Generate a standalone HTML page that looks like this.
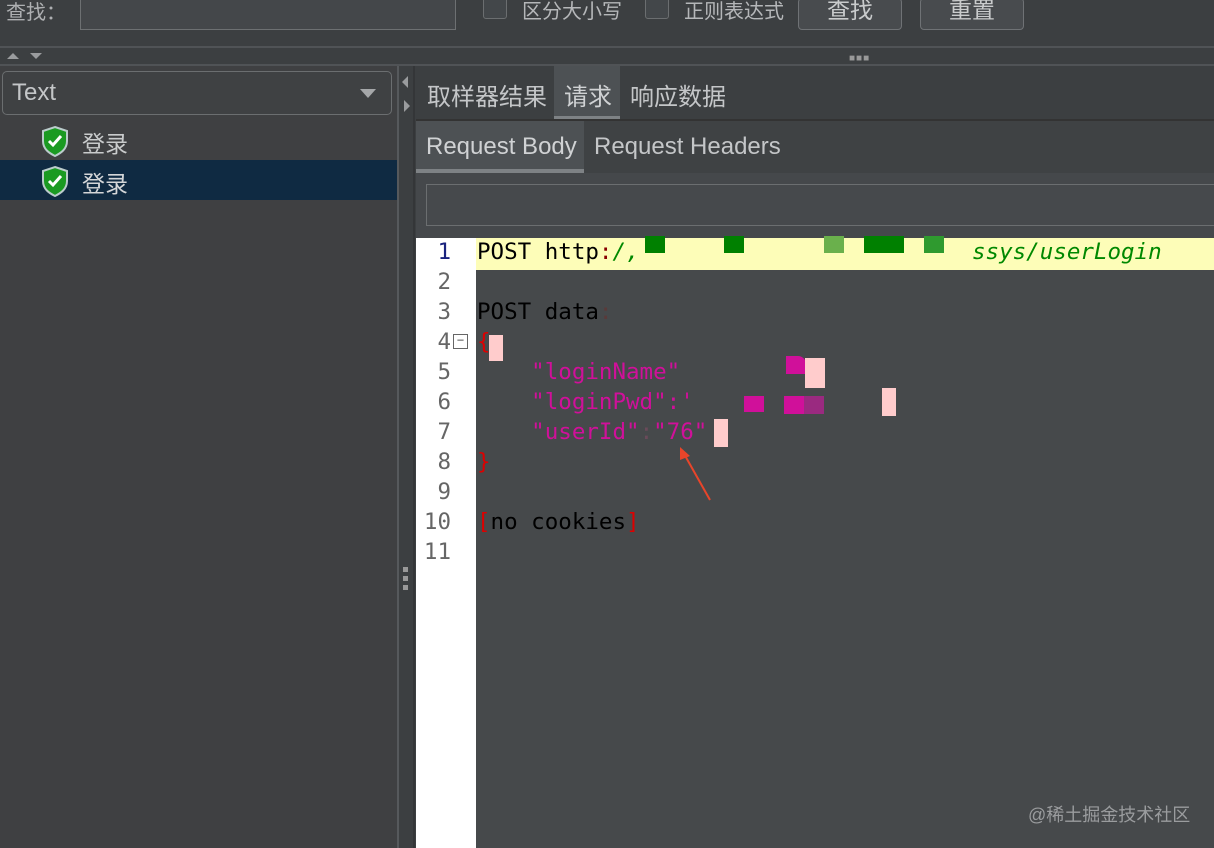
<!DOCTYPE html>
<html><head><meta charset="utf-8"><style>
*{margin:0;padding:0;box-sizing:border-box}
body{width:1214px;height:848px;overflow:hidden;background:#3c3f41;font-family:"Liberation Sans","Noto Sans CJK SC",sans-serif;color:#c9cbcc;position:relative}
.a{position:absolute}
.cb{position:absolute;width:24px;height:22px;border:1px solid #6b6e70;border-radius:3px;background:#43474a}
.btn{position:absolute;height:32px;border:1px solid #6f7275;border-radius:4px;background:#484b4e;font-size:23px;text-align:center;line-height:22px;color:#c9cbcc}
.mono{font-family:"DejaVu Sans Mono","Liberation Mono",monospace;font-size:22.5px;white-space:pre}
.ln{position:absolute;left:416px;width:60px;text-align:right;padding-right:25px;color:#666}
.cl{position:absolute;left:477px}
</style></head><body>
<div class="a" style="left:6px;top:-4px;font-size:20px;color:#aeb0b2">查找：</div>
<div class="a" style="left:80px;top:-4px;width:376px;height:34px;border:1px solid #6d7072;background:#44474a"></div>
<div class="cb" style="left:483px;top:-3px"></div>
<div class="a" style="left:522px;top:-5px;font-size:20px;color:#b5b7b9">区分大小写</div>
<div class="cb" style="left:645px;top:-3px"></div>
<div class="a" style="left:684px;top:-5px;font-size:20px;color:#b5b7b9">正则表达式</div>
<div class="btn" style="left:798px;top:-2px;width:104px">查找</div>
<div class="btn" style="left:920px;top:-2px;width:104px">重置</div>
<div class="a" style="left:0;top:46px;width:1214px;height:2px;background:#505356"></div>
<div class="a" style="left:7px;top:53px;width:0;height:0;border-left:6px solid transparent;border-right:6px solid transparent;border-bottom:6px solid #9a9c9e"></div>
<div class="a" style="left:30px;top:53px;width:0;height:0;border-left:6px solid transparent;border-right:6px solid transparent;border-top:6px solid #9a9c9e"></div>
<div class="a" style="left:849px;top:53px;font-size:10px;color:#999;letter-spacing:1px">■■■</div>
<div class="a" style="left:0;top:64px;width:1214px;height:2px;background:#505356"></div>
<div class="a" style="left:0;top:66px;width:397px;height:782px;background:#3f4042"></div>
<div class="a" style="left:2px;top:71px;width:390px;height:44px;border:1px solid #6b6e70;border-radius:5px;background:#3f4143"></div>
<div class="a" style="left:12px;top:79px;font-size:24px;color:#c4c6c8">Text</div>
<div class="a" style="left:360px;top:89px;width:0;height:0;border-left:8px solid transparent;border-right:8px solid transparent;border-top:9px solid #a5a7a9"></div>
<div class="a" style="left:0;top:160px;width:397px;height:40px;background:#0f2a42"></div>
<svg class="a" style="left:40px;top:125px" width="30" height="32" viewBox="0 0 30 32"><path d="M15 2 L27 6 V16 C27 24 21 28 15 31 C9 28 3 24 3 16 V6 Z" fill="#1a9a22" stroke="#bcc" stroke-width="2"/><path d="M9 16 L13 20 L21 11" fill="none" stroke="#fff" stroke-width="3"/></svg>
<div class="a" style="left:82px;top:125px;font-size:23px;color:#c9cbcc">登录</div>
<svg class="a" style="left:40px;top:165px" width="30" height="32" viewBox="0 0 30 32"><path d="M15 2 L27 6 V16 C27 24 21 28 15 31 C9 28 3 24 3 16 V6 Z" fill="#1a9a22" stroke="#bcc" stroke-width="2"/><path d="M9 16 L13 20 L21 11" fill="none" stroke="#fff" stroke-width="3"/></svg>
<div class="a" style="left:82px;top:165px;font-size:23px;color:#d4d6d8">登录</div>
<div class="a" style="left:397px;top:66px;width:2px;height:782px;background:#56595c"></div>
<div class="a" style="left:402px;top:76px;width:0;height:0;border-top:6px solid transparent;border-bottom:6px solid transparent;border-right:6px solid #9a9c9e"></div>
<div class="a" style="left:404px;top:100px;width:0;height:0;border-top:6px solid transparent;border-bottom:6px solid transparent;border-left:6px solid #9a9c9e"></div>
<div class="a" style="left:403px;top:567px;width:5px;height:26px;background:repeating-linear-gradient(#999 0 5px,transparent 5px 9px)"></div>
<div class="a" style="left:413px;top:66px;width:2px;height:782px;background:#343638"></div>
<div class="a" style="left:416px;top:66px;width:798px;height:54px;background:#3c3f41"></div>
<div class="a" style="left:427px;top:77px;font-size:24px;color:#c4c6c8">取样器结果</div>
<div class="a" style="left:554px;top:66px;width:66px;height:54px;background:#4d5154;border-bottom:4px solid #7e8285"></div>
<div class="a" style="left:564px;top:77px;font-size:24px;color:#d0d2d4">请求</div>
<div class="a" style="left:630px;top:77px;font-size:24px;color:#c4c6c8">响应数据</div>
<div class="a" style="left:416px;top:119px;width:798px;height:2px;background:#333"></div>
<div class="a" style="left:416px;top:121px;width:798px;height:52px;background:#3f4244"></div>
<div class="a" style="left:416px;top:121px;width:168px;height:52px;background:#4d5154;border-bottom:4px solid #7e8285"></div>
<div class="a" style="left:426px;top:133px;font-size:24px;color:#d0d2d4">Request Body</div>
<div class="a" style="left:594px;top:133px;font-size:24px;color:#c4c6c8">Request Headers</div>
<div class="a" style="left:416px;top:173px;width:798px;height:65px;background:#45484b"></div>
<div class="a" style="left:426px;top:184px;width:800px;height:42px;border:1px solid #6b6e70;background:#46494c"></div>
<div class="a" style="left:416px;top:238px;width:60px;height:610px;background:#fff"></div>
<div class="a" style="left:476px;top:238px;width:738px;height:610px;background:#46494b"></div>
<div class="a" style="left:476px;top:238px;width:738px;height:32px;background:#fdfdb8"></div>
<div class="a" style="left:645px;top:236px;width:20px;height:17px;background:#008000"></div>
<div class="a" style="left:724px;top:236px;width:20px;height:17px;background:#008000"></div>
<div class="a" style="left:824px;top:236px;width:20px;height:17px;background:#6ab04c"></div>
<div class="a" style="left:864px;top:236px;width:40px;height:17px;background:#008000"></div>
<div class="a" style="left:924px;top:236px;width:20px;height:17px;background:#2f9a2f"></div>
<div class="mono">
<div class="ln" style="top:239px;color:#1a237e">1</div>
<div class="ln" style="top:269px">2</div>
<div class="ln" style="top:299px">3</div>
<div class="ln" style="top:329px">4</div>
<div class="ln" style="top:359px">5</div>
<div class="ln" style="top:389px">6</div>
<div class="ln" style="top:419px">7</div>
<div class="ln" style="top:449px">8</div>
<div class="ln" style="top:479px">9</div>
<div class="ln" style="top:509px">10</div>
<div class="ln" style="top:539px">11</div>
<div class="a" style="left:453px;top:334px;width:15px;height:15px;border:1px solid #666;font-size:12px;line-height:11px;text-align:center;color:#555">−</div>
<div class="cl" style="top:239px;color:#000">POST http<span style="color:#800">:</span><span style="color:#080;font-style:italic">/,</span></div>
<div class="cl" style="top:239px;left:972px;color:#080;font-style:italic">ssys/userLogin</div>
<div class="cl" style="top:299px;color:#000">POST data<span style="color:#5a3a3a">:</span></div>
<div class="cl" style="top:329px;color:#d00">{</div>
<div class="a" style="left:489px;top:335px;width:14px;height:26px;background:#fcc"></div>
<div class="cl" style="top:359px;color:#d0109a">    "loginName"</div>
<div class="a" style="left:786px;top:356px;width:20px;height:18px;background:#d0109a;border-radius:0 8px 0 0"></div>
<div class="a" style="left:805px;top:358px;width:20px;height:30px;background:#fcc"></div>
<div class="cl" style="top:389px;color:#d0109a">    "loginPwd":'</div>
<div class="a" style="left:744px;top:396px;width:20px;height:16px;background:#d0109a"></div>
<div class="a" style="left:784px;top:396px;width:20px;height:18px;background:#d0109a"></div>
<div class="a" style="left:804px;top:396px;width:20px;height:18px;background:#9a2a80"></div>
<div class="a" style="left:882px;top:388px;width:14px;height:28px;background:#fcc"></div>
<div class="cl" style="top:419px;color:#d0109a">    "userId"<span style="color:#6a4a5a">:</span>"76"</div>
<div class="a" style="left:714px;top:419px;width:14px;height:28px;background:#fcc"></div>
<div class="cl" style="top:449px;color:#d00">}</div>
<div class="cl" style="top:509px;color:#000"><span style="color:#d00">[</span>no cookies<span style="color:#d00">]</span></div>
</div>
<svg class="a" style="left:676px;top:446px" width="40" height="58"><line x1="34" y1="54" x2="7" y2="6" stroke="#e8452a" stroke-width="2"/><path d="M4 1 L14 10 L4 14 Z" fill="#e8452a"/></svg>
<div class="a" style="left:1028px;top:801px;font-size:18px;color:#9a9c9e">@稀土掘金技术社区</div>
</body></html>
